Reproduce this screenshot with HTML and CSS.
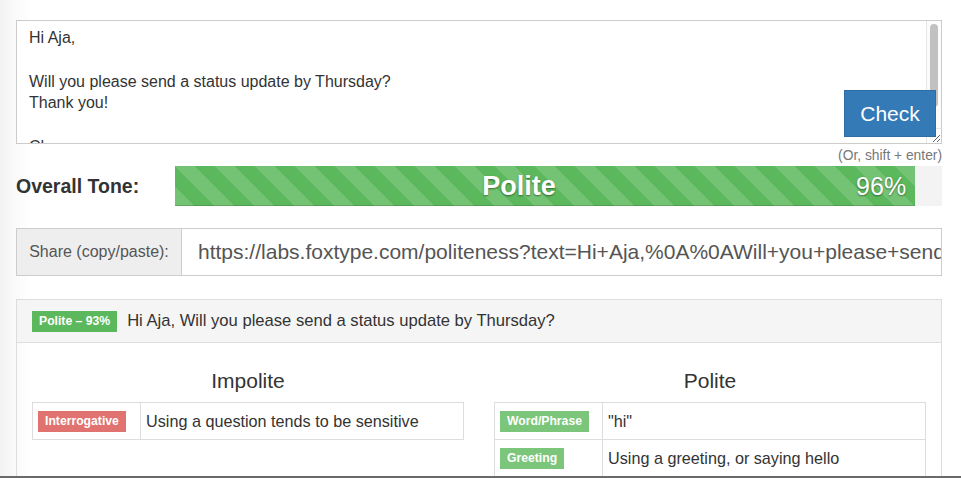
FILE: index.html
```html
<!DOCTYPE html>
<html>
<head>
<meta charset="utf-8">
<link rel="stylesheet" href="styles.css">
</head>
<body>
<div class="page">
  <div class="editor">
    <textarea class="message">Hi Aja,

Will you please send a status update by Thursday?
Thank you!

Cheers,
Greg
</textarea>
    <div class="scrollbar"><div class="thumb"></div></div>
    <div class="scroll-corner"></div>
    <button class="check">Check</button>
  </div>
  <div class="hint">(Or, shift + enter)</div>

  <div class="tone">
    <div class="tone-label">Overall Tone:</div>
    <div class="track">
      <div class="bar" style="width: 96.5%">
        <span class="bar-name">Polite</span>
        <span class="bar-pct">96%</span>
      </div>
    </div>
  </div>

  <div class="share">
    <div class="share-addon">Share (copy/paste):</div>
    <div class="share-input">https://labs.foxtype.com/politeness?text=Hi+Aja,%0A%0AWill+you+please+send+a+status+update+by+Thursday%3F%0AThank+you!</div>
  </div>

  <div class="panel">
    <div class="panel-heading">
      <span class="label label-polite">Polite – 93%</span>
      <span class="sentence">Hi Aja, Will you please send a status update by Thursday?</span>
    </div>
    <div class="panel-body">
      <div class="col">
        <h4 class="col-title">Impolite</h4>
        <table class="features">
          <tr>
            <td class="tag-cell"><span class="label label-bad">Interrogative</span></td>
            <td>Using a question tends to be sensitive</td>
          </tr>
        </table>
      </div>
      <div class="col">
        <h4 class="col-title">Polite</h4>
        <table class="features">
          <tr>
            <td class="tag-cell"><span class="label label-good">Word/Phrase</span></td>
            <td>"hi"</td>
          </tr>
          <tr>
            <td class="tag-cell"><span class="label label-good">Greeting</span></td>
            <td>Using a greeting, or saying hello</td>
          </tr>
          <tr>
            <td class="tag-cell"><span class="label label-good">Gratitude</span></td>
            <td>Expressing thanks</td>
          </tr>
        </table>
      </div>
    </div>
  </div>
</div>
<div class="window-edge"></div>
</body>
</html>
```

FILE: styles.css
```css
html, body {
  margin: 0;
  padding: 0;
}
body {
  font-family: "Liberation Sans", Arial, sans-serif;
  color: #333;
  background: linear-gradient(to right, #f3f3f3 0, #fbfbfb 18px, #fff 30px);
  min-height: 478px;
}
.page {
  padding: 20px 19px 20px 16px;
}
.editor {
  position: relative;
}
.message {
  display: block;
  box-sizing: border-box;
  width: 100%;
  height: 124px;
  margin: 0;
  padding: 6px 12px;
  border: 1px solid #ccc;
  border-radius: 0;
  font-family: "Liberation Sans", Arial, sans-serif;
  font-size: 16px;
  line-height: 21.8px;
  color: #333;
  resize: vertical;
  overflow: hidden;
  outline: none;
}
.scrollbar {
  position: absolute;
  right: 1px;
  top: 1px;
  width: 15px;
  height: 107px;
  box-sizing: border-box;
  border-left: 1px solid #e6e6e6;
  background: #fcfcfc;
  padding: 3px 3px 0 3px;
}
.thumb {
  width: 8px;
  height: 83px;
  border-radius: 4px;
  background: #c1c1c1;
}
.scroll-corner {
  position: absolute;
  right: 1px;
  bottom: 1px;
  width: 15px;
  height: 15px;
  box-sizing: border-box;
  border-left: 1px solid #e6e6e6;
  border-top: 1px solid #e6e6e6;
  pointer-events: none;
}
.check {
  position: absolute;
  right: 6px;
  top: 70px;
  width: 92px;
  height: 47px;
  background: #337ab7;
  border: 1px solid #2e6da4;
  color: #fff;
  font-family: "Liberation Sans", Arial, sans-serif;
  font-size: 21px;
  padding: 0;
  cursor: pointer;
  z-index: 2;
}
.hint {
  text-align: right;
  font-size: 13.8px;
  color: #777;
  line-height: 16px;
  padding: 4px 0 2px;
}
.tone {
  display: flex;
  align-items: center;
  height: 40px;
}
.tone-label {
  width: 159px;
  flex: none;
  font-weight: bold;
  font-size: 19.5px;
  color: #333;
}
.track {
  flex: 1;
  height: 40px;
  background: #f3f3f3;
  display: flex;
}
.bar {
  height: 40px;
  box-sizing: border-box;
  background-color: #5cb85c;
  background-image: linear-gradient(45deg, rgba(255,255,255,.15) 25%, transparent 25%, transparent 50%, rgba(255,255,255,.15) 50%, rgba(255,255,255,.15) 75%, transparent 75%, transparent);
  background-size: 40px 40px;
  box-shadow: inset 0 -1px 0 rgba(0,0,0,.15);
  display: grid;
  grid-template-columns: 1fr auto;
  align-items: center;
  color: #fff;
  text-shadow: 0 1px 2px rgba(0,0,0,.45);
}
.bar-name {
  text-align: center;
  font-weight: bold;
  font-size: 27px;
  padding-left: 7px;
}
.bar-pct {
  font-size: 25px;
  padding-right: 9px;
}
.share {
  display: flex;
  margin-top: 22px;
  height: 48px;
  box-sizing: border-box;
}
.share-addon {
  flex: none;
  width: 165px;
  box-sizing: border-box;
  background: #eee;
  border: 1px solid #ccc;
  border-right: none;
  font-size: 16px;
  color: #555;
  display: flex;
  align-items: center;
  justify-content: center;
}
.share-input {
  flex: 1;
  min-width: 0;
  border: 1px solid #ccc;
  padding: 0 16px;
  font-size: 21px;
  color: #555;
  white-space: nowrap;
  overflow: hidden;
  display: flex;
  align-items: center;
}
.panel {
  margin-top: 23px;
  border: 1px solid #ddd;
}
.panel-heading {
  background: #f5f5f5;
  border-bottom: 1px solid #ddd;
  height: 43px;
  box-sizing: border-box;
  padding: 0 15px;
  display: flex;
  align-items: center;
  gap: 10px;
}
.sentence {
  font-size: 16.6px;
  color: #333;
}
.label {
  display: inline-block;
  vertical-align: top;
  font-size: 12.2px;
  font-weight: bold;
  line-height: 21px;
  padding: 0 7px;
  color: #fff;
  white-space: nowrap;
}
.label-polite {
  background: #5cb85c;
}
.label-good {
  background: #7bc67b;
}
.label-bad {
  background: #e0736f;
}
.panel-body {
  padding: 15px 15px 20px;
  display: grid;
  grid-template-columns: 1fr 1fr;
  column-gap: 30px;
  align-items: start;
}
.col-title {
  margin: 12px 0 10px;
  font-size: 21px;
  line-height: 22px;
  font-weight: normal;
  text-align: center;
  color: #333;
}
.features {
  width: 100%;
  border-collapse: collapse;
}
.features td {
  border: 1px solid #ddd;
  padding: 8px 5px 7px;
  font-size: 16.2px;
  line-height: 21px;
  vertical-align: top;
}
.features td.tag-cell {
  width: 97px;
}
.window-edge {
  position: fixed;
  left: 0;
  right: 0;
  bottom: 0;
  height: 2px;
  background: #6a6a6a;
}
```
